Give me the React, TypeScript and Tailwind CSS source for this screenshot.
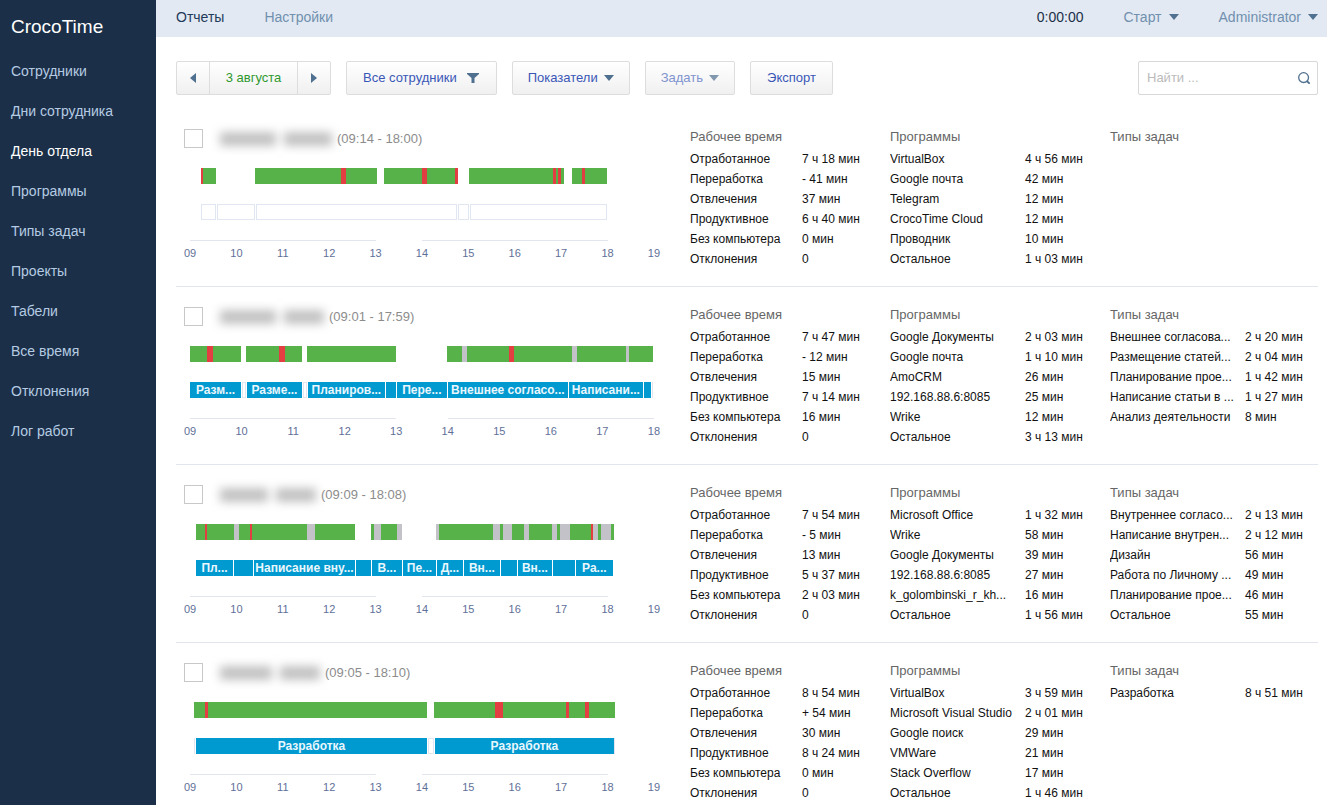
import clsx from 'clsx';

type Kind = 'work' | 'distraction' | 'idle' | 'gap' | 'task' | 'empty';
type Segment = [kind: Kind, width: number, label?: string];
type Pair = [name: string, value: string];

interface Employee {
  id: number;
  nameWidths: string[];
  range: string;
  hours: number;
  activity: Segment[];
  tasks: Segment[];
  time: Pair[];
  programs: Pair[];
  taskTypes: Pair[];
}

// Segment widths are given in units of the whole time axis
const AXIS_UNITS = 464;

const MENU = [
  'Сотрудники',
  'Дни сотрудника',
  'День отдела',
  'Программы',
  'Типы задач',
  'Проекты',
  'Табели',
  'Все время',
  'Отклонения',
  'Лог работ',
];

const EMPLOYEES: Employee[] = [
  {
    id: 1,
    nameWidths: ['w-14', 'w-12'],
    range: '(09:14 - 18:00)',
    hours: 10,
    activity: [
      ['gap', 11], ['distraction', 2], ['work', 13], ['gap', 39], ['work', 86], ['distraction', 5],
      ['work', 31], ['gap', 7], ['work', 38], ['distraction', 5], ['work', 28], ['distraction', 3],
      ['gap', 11], ['work', 84], ['distraction', 3], ['work', 2], ['distraction', 3], ['work', 3],
      ['gap', 8], ['work', 10], ['distraction', 3], ['work', 22],
    ],
    tasks: [
      ['gap', 11], ['empty', 15], ['gap', 1], ['empty', 38], ['gap', 1], ['empty', 201],
      ['gap', 1], ['empty', 11], ['gap', 1], ['empty', 137],
    ],
    time: [
      ['Отработанное', '7 ч 18 мин'],
      ['Переработка', '- 41 мин'],
      ['Отвлечения', '37 мин'],
      ['Продуктивное', '6 ч 40 мин'],
      ['Без компьютера', '0 мин'],
      ['Отклонения', '0'],
    ],
    programs: [
      ['VirtualBox', '4 ч 56 мин'],
      ['Google почта', '42 мин'],
      ['Telegram', '12 мин'],
      ['CrocoTime Cloud', '12 мин'],
      ['Проводник', '10 мин'],
      ['Остальное', '1 ч 03 мин'],
    ],
    taskTypes: [],
  },
  {
    id: 2,
    nameWidths: ['w-14', 'w-10'],
    range: '(09:01 - 17:59)',
    hours: 9,
    activity: [
      ['work', 17], ['distraction', 6], ['work', 28], ['gap', 5], ['work', 33], ['distraction', 6],
      ['work', 17], ['gap', 5], ['work', 89], ['gap', 51], ['work', 15], ['idle', 5], ['work', 42],
      ['distraction', 5], ['work', 58], ['idle', 5], ['work', 49], ['idle', 3], ['work', 24],
    ],
    tasks: [
      ['task', 51, 'Разм...'], ['gap', 1], ['empty', 4], ['gap', 1], ['task', 55, 'Разме...'],
      ['gap', 1], ['empty', 4], ['gap', 1], ['task', 77, 'Планиров...'], ['gap', 1], ['task', 10],
      ['gap', 1], ['task', 50, 'Пере...'], ['gap', 1], ['task', 120, 'Внешнее согласо...'],
      ['gap', 1], ['task', 74, 'Написани...'], ['gap', 1], ['task', 7], ['gap', 1], ['empty', 1],
    ],
    time: [
      ['Отработанное', '7 ч 47 мин'],
      ['Переработка', '- 12 мин'],
      ['Отвлечения', '15 мин'],
      ['Продуктивное', '7 ч 14 мин'],
      ['Без компьютера', '16 мин'],
      ['Отклонения', '0'],
    ],
    programs: [
      ['Google Документы', '2 ч 03 мин'],
      ['Google почта', '1 ч 10 мин'],
      ['AmoCRM', '26 мин'],
      ['192.168.88.6:8085', '25 мин'],
      ['Wrike', '12 мин'],
      ['Остальное', '3 ч 13 мин'],
    ],
    taskTypes: [
      ['Внешнее согласова...', '2 ч 20 мин'],
      ['Размещение статей...', '2 ч 04 мин'],
      ['Планирование прое...', '1 ч 42 мин'],
      ['Написание статьи в ...', '1 ч 27 мин'],
      ['Анализ деятельности', '8 мин'],
    ],
  },
  {
    id: 3,
    nameWidths: ['w-12', 'w-10'],
    range: '(09:09 - 18:08)',
    hours: 10,
    activity: [
      ['gap', 6], ['work', 9], ['distraction', 2], ['work', 27], ['idle', 5], ['work', 11],
      ['distraction', 2], ['work', 55], ['idle', 8], ['work', 40], ['gap', 16], ['work', 3],
      ['idle', 7], ['work', 16], ['idle', 5], ['gap', 34], ['idle', 3], ['work', 54], ['idle', 7],
      ['work', 3], ['idle', 9], ['work', 12], ['idle', 5], ['work', 23], ['idle', 5], ['work', 3],
      ['idle', 10], ['work', 21], ['distraction', 2], ['idle', 5], ['work', 3], ['idle', 10],
      ['work', 3],
    ],
    tasks: [
      ['gap', 6], ['task', 37, 'Пл...'], ['gap', 1], ['task', 19], ['gap', 1],
      ['task', 101, 'Написание вну...'], ['gap', 1], ['task', 15], ['gap', 1], ['task', 30, 'В...'],
      ['gap', 1], ['task', 33, 'Пе...'], ['gap', 1], ['task', 26, 'Д...'], ['gap', 1],
      ['task', 36, 'Вн...'], ['gap', 1], ['task', 16], ['gap', 1], ['task', 34, 'Вн...'],
      ['gap', 1], ['task', 22], ['gap', 1], ['task', 37, 'Ра...'],
    ],
    time: [
      ['Отработанное', '7 ч 54 мин'],
      ['Переработка', '- 5 мин'],
      ['Отвлечения', '13 мин'],
      ['Продуктивное', '5 ч 37 мин'],
      ['Без компьютера', '2 ч 03 мин'],
      ['Отклонения', '0'],
    ],
    programs: [
      ['Microsoft Office', '1 ч 32 мин'],
      ['Wrike', '58 мин'],
      ['Google Документы', '39 мин'],
      ['192.168.88.6:8085', '27 мин'],
      ['k_golombinski_r_kh...', '16 мин'],
      ['Остальное', '1 ч 56 мин'],
    ],
    taskTypes: [
      ['Внутреннее согласо...', '2 ч 13 мин'],
      ['Написание внутрен...', '2 ч 12 мин'],
      ['Дизайн', '56 мин'],
      ['Работа по Личному ...', '49 мин'],
      ['Планирование прое...', '46 мин'],
      ['Остальное', '55 мин'],
    ],
  },
  {
    id: 4,
    nameWidths: ['w-13', 'w-10'],
    range: '(09:05 - 18:10)',
    hours: 10,
    activity: [
      ['gap', 4], ['work', 11], ['distraction', 3], ['work', 219], ['gap', 7], ['work', 61],
      ['distraction', 8], ['work', 63], ['distraction', 3], ['work', 16], ['distraction', 4],
      ['work', 26],
    ],
    tasks: [
      ['gap', 4], ['empty', 1], ['gap', 1], ['task', 231, 'Разработка'], ['gap', 1], ['empty', 6],
      ['gap', 1], ['task', 179, 'Разработка'], ['empty', 1],
    ],
    time: [
      ['Отработанное', '8 ч 54 мин'],
      ['Переработка', '+ 54 мин'],
      ['Отвлечения', '30 мин'],
      ['Продуктивное', '8 ч 24 мин'],
      ['Без компьютера', '0 мин'],
      ['Отклонения', '0'],
    ],
    programs: [
      ['VirtualBox', '3 ч 59 мин'],
      ['Microsoft Visual Studio', '2 ч 01 мин'],
      ['Google поиск', '29 мин'],
      ['VMWare', '21 мин'],
      ['Stack Overflow', '17 мин'],
      ['Остальное', '1 ч 46 мин'],
    ],
    taskTypes: [['Разработка', '8 ч 51 мин']],
  },
];

const SEGMENT_STYLES: Record<Kind, string> = {
  work: 'bg-[#56b249]',
  distraction: 'bg-[#e33f43]',
  idle: 'bg-[#c3c2c8]',
  gap: '',
  task: 'bg-[#0099d0]',
  empty: 'inset-ring inset-ring-[#e0e7f2]',
};

const BUTTON =
  'flex h-[34px] items-center rounded-xs border border-[#dddddd] bg-linear-to-b from-white to-[#f0f0f0] text-[13px]';

function Caret({ className }: { className?: string }) {
  return (
    <svg width="10" height="6" viewBox="0 0 10 6" className={clsx('shrink-0', className)} aria-hidden="true">
      <path d="M0 0h10L5 6z" fill="#50708f" />
    </svg>
  );
}

function Sidebar() {
  return (
    <aside className="w-39 shrink-0 bg-[#1b3048] pl-[11px]">
      <div className="pt-3 text-[19px] leading-[30px] text-white">CrocoTime</div>
      <nav className="mt-[9px] flex flex-col">
        {MENU.map((item) => (
          <a
            key={item}
            href="#"
            className={clsx('text-sm leading-10', item === 'День отдела' ? 'text-white' : 'text-[#b5cbe3]')}
          >
            {item}
          </a>
        ))}
      </nav>
    </aside>
  );
}

function Header() {
  return (
    <header className="flex h-[37px] items-center bg-[#e2e9f3] pr-[9px] pb-[3px] pl-5 text-sm text-[#7190ae]">
      <a href="#" className="text-[#1f3a5a]">Отчеты</a>
      <a href="#" className="ml-10">Настройки</a>
      <span className="ml-auto text-[#1b3048]">0:00:00</span>
      <button className="ml-10 flex items-center gap-[7px]">
        Старт
        <Caret />
      </button>
      <button className="ml-10 flex items-center gap-[7px]">
        Administrator
        <Caret />
      </button>
    </header>
  );
}

function Toolbar() {
  return (
    <div className="flex items-center gap-[15px]">
      <div className="flex h-[34px] rounded-xs border border-[#dddddd] bg-linear-to-b from-white to-[#f0f0f0] text-[13px]">
        <button className="flex w-8 items-center justify-center" aria-label="Предыдущий день">
          <svg width="6" height="10" viewBox="0 0 6 10" aria-hidden="true">
            <path d="M6 0v10L0 5z" fill="#50708f" />
          </svg>
        </button>
        <button className="min-w-[89px] border-x border-[#dddddd] px-[15px] text-[#2f992f]">3 августа</button>
        <button className="flex w-8 items-center justify-center" aria-label="Следующий день">
          <svg width="6" height="10" viewBox="0 0 6 10" aria-hidden="true">
            <path d="M0 0v10l6-5z" fill="#50708f" />
          </svg>
        </button>
      </div>
      <button className={clsx(BUTTON, 'gap-[10px] px-4 text-[#3a57b7]')}>
        Все сотрудники
        <svg width="12" height="10" viewBox="0 0 12 10" className="mr-px" aria-hidden="true">
          <path d="M0 0h12v1L7.5 5V10h-3V5L0 1z" fill="#50708f" />
        </svg>
      </button>
      <button className={clsx(BUTTON, 'gap-[6px] px-[15px] text-[#3a57b7]')}>
        Показатели
        <Caret />
      </button>
      <button className={clsx(BUTTON, 'gap-[6px] px-[15px] text-[#7f93cf]')}>
        Задать
        <Caret className="opacity-70" />
      </button>
      <button className={clsx(BUTTON, 'px-4 text-[#3a57b7]')}>Экспорт</button>
      <div className="ml-auto flex h-[34px] w-45 items-center rounded-xs border border-[#d8d8d8] pr-[7px] pl-2">
        <input
          type="text"
          aria-label="Найти"
          placeholder="Найти ..."
          className="min-w-0 flex-1 text-[13px] outline-none placeholder:text-[#bbbbbb]"
        />
        <svg width="12" height="12" viewBox="0 0 12 12" fill="none" stroke="#50708f" strokeWidth="1.3" aria-hidden="true">
          <circle cx="5.6" cy="5.6" r="4.9" />
          <path d="M8.8 9l2.9 2.7" strokeWidth="1.8" />
        </svg>
      </div>
    </div>
  );
}

function Track({ segments }: { segments: Segment[] }) {
  return (
    <div className="mt-5 flex h-4">
      {segments.map(([kind, width, label], i) => (
        <div
          key={i}
          className={clsx(
            'shrink-0 overflow-hidden text-center text-xs leading-4 font-bold whitespace-nowrap text-[#eaf7fd]',
            SEGMENT_STYLES[kind],
          )}
          style={{ width: `${(width / AXIS_UNITS) * 100}%` }}
        >
          {label}
        </div>
      ))}
    </div>
  );
}

function Axis({ hours }: { hours: number }) {
  const marks = Array.from({ length: hours + 1 }, (_, i) => String(9 + i).padStart(2, '0'));
  const hour = 100 / hours;
  return (
    <div className="mt-5">
      <div className="flex">
        <div className="h-px bg-[#e2e5ee]" style={{ width: `${hour * 4}%` }} />
        <div style={{ width: `${hour}%` }} />
        <div className="h-px bg-[#e2e5ee]" style={{ width: `${hour * 4}%` }} />
      </div>
      <div className="mt-1 flex justify-between text-[11px] leading-4 text-[#5f7098]">
        {marks.map((mark) => (
          <span key={mark} className="flex w-0 justify-center">{mark}</span>
        ))}
      </div>
    </div>
  );
}

function StatTable({ title, rows, narrow }: { title: string; rows: Pair[]; narrow?: boolean }) {
  return (
    <table className="w-full table-fixed text-xs leading-5 text-[#111111]">
      <colgroup>
        <col className={narrow ? 'w-28' : 'w-[135px]'} />
        <col />
      </colgroup>
      <thead>
        <tr>
          <th colSpan={2} className="p-0 text-left text-[13px] leading-6 font-normal text-[#666666]">{title}</th>
        </tr>
      </thead>
      <tbody>
        {rows.map(([name, value]) => (
          <tr key={name}>
            <td className="truncate p-0">{name}</td>
            <td className="p-0 whitespace-nowrap">{value}</td>
          </tr>
        ))}
      </tbody>
    </table>
  );
}

function EmployeeRow({ employee }: { employee: Employee }) {
  return (
    <section className="flex items-start border-b border-[#e2e5ee] pt-4 pb-[17px] last:border-b-0 last:pb-0">
      <div className="w-[514px] shrink-0">
        <div className="flex h-[27px] items-center pl-2 text-[13px] text-[#8c8c8c]">
          <input
            type="checkbox"
            aria-label={`Выбрать сотрудника ${employee.id}`}
            className="size-[19px] shrink-0 appearance-none border border-[#c8c8c8] bg-white"
          />
          {/* Hidden name */}
          <div className="mr-[5px] ml-[17px] flex gap-2 blur-[5px]" aria-hidden="true">
            {employee.nameWidths.map((width, i) => (
              <span key={i} className={clsx('h-[14px] bg-[#c2c2c2]', width)} />
            ))}
          </div>
          {employee.range}
        </div>
        <div className="mr-9 ml-[14px] -mt-1">
          <Track segments={employee.activity} />
          <Track segments={employee.tasks} />
          <Axis hours={employee.hours} />
        </div>
      </div>
      <div className="w-50 shrink-0">
        <StatTable title="Рабочее время" rows={employee.time} narrow />
      </div>
      <div className="w-55 shrink-0">
        <StatTable title="Программы" rows={employee.programs} />
      </div>
      <div className="min-w-0 flex-1">
        <StatTable title="Типы задач" rows={employee.taskTypes} />
      </div>
    </section>
  );
}

export default function App() {
  return (
    <div className="flex min-h-screen bg-white font-['Liberation_Sans',Arial,sans-serif]">
      <Sidebar />
      <div className="min-w-0 flex-1">
        <Header />
        <main className="pt-6 pr-[9px] pl-5">
          <Toolbar />
          <div className="mt-[14px]">
            {EMPLOYEES.map((employee) => (
              <EmployeeRow key={employee.id} employee={employee} />
            ))}
          </div>
        </main>
      </div>
    </div>
  );
}
